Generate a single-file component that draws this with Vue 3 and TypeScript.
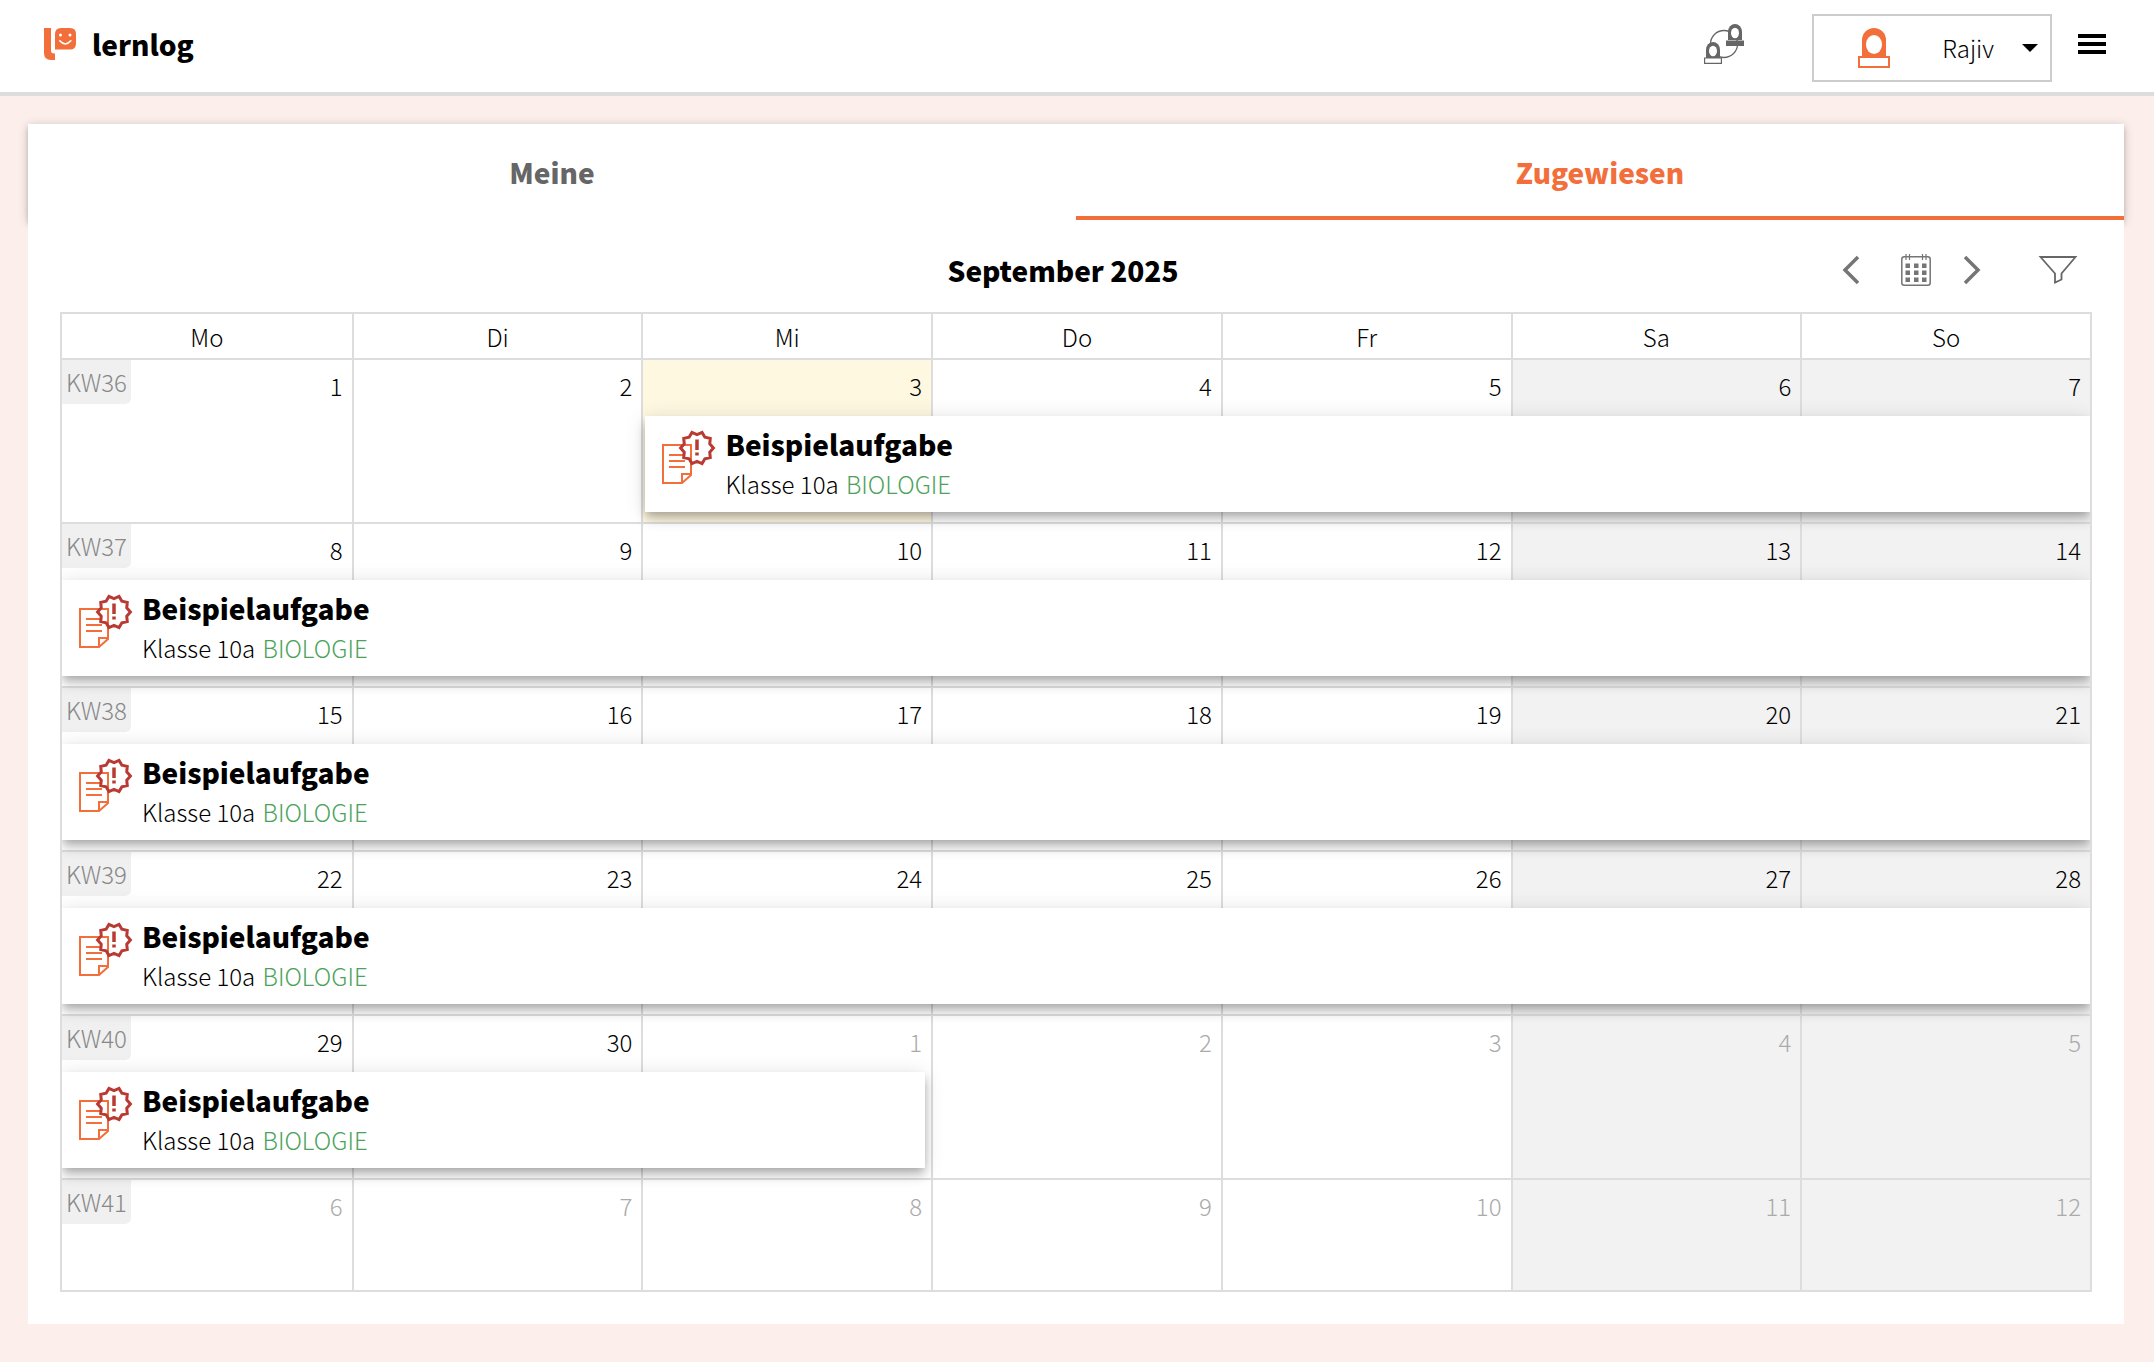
<script setup lang="ts">
interface Day {
  num: number
  muted: boolean
  today: boolean
  weekend: boolean
}
interface Entry {
  start: number
  span: number
  opens: boolean
  closes: boolean
}
interface Week {
  label: string
  days: Day[]
  entry: Entry | null
}

const weekdays = ['Mo', 'Di', 'Mi', 'Do', 'Fr', 'Sa', 'So']
const firstTaskDay = 3
const lastTaskDay = 31
const daysInMonth = 30

const weeks: Week[] = Array.from({ length: 6 }, (_, w) => {
  const days = weekdays.map((_, d) => {
    const serial = w * 7 + d + 1
    return {
      num: serial > daysInMonth ? serial - daysInMonth : serial,
      muted: serial > daysInMonth,
      today: serial === 3,
      weekend: d > 4,
    }
  })
  const monday = w * 7 + 1
  const from = Math.max(monday, firstTaskDay)
  const to = Math.min(monday + 6, lastTaskDay)
  const entry =
    from <= to
      ? { start: from - monday, span: to - from + 1, opens: from === firstTaskDay, closes: to === lastTaskDay }
      : null
  return { label: `KW${36 + w}`, days, entry }
})

function entryStyle(e: Entry) {
  return { left: `${(e.start / 7) * 100}%`, width: `${(e.span / 7) * 100}%` }
}

// ten-toothed seal outline around (36, 18)
const seal = Array.from({ length: 20 }, (_, i) => {
  const r = i % 2 ? 13.4 : 16.4
  const a = (i * Math.PI) / 10
  return `${(36 + r * Math.cos(a)).toFixed(2)},${(18 + r * Math.sin(a)).toFixed(2)}`
}).join(' ')
</script>

<template>
  <div class="page">
    <header class="topbar">
      <a class="brand" href="#">
        <svg width="32" height="32" viewBox="0 0 32 32" aria-hidden="true">
          <path d="M0 0h7v22.500q0 3 3 3h1V32H7q-7 0-7-7z" fill="#f26f3c" />
          <path d="M11 21.500V6q0-6 6-6h9q6 0 6 6v9.500q0 6-6 6z" fill="#f26f3c" />
          <circle cx="16.500" cy="7" r="1.500" fill="#fff" />
          <circle cx="26" cy="7" r="1.500" fill="#fff" />
          <path d="M15.800 12.800q5.500 6.400 11 0" fill="none" stroke="#fff" stroke-width="1.700" stroke-linecap="round" />
        </svg>
        <span>lernlog</span>
      </a>
      <button class="icon-btn contacts" type="button" aria-label="Kontakte">
        <svg width="40" height="40" viewBox="0 0 40 40">
          <circle cx="20" cy="20" r="13.500" fill="none" stroke="#666" stroke-width="1.300" />
          <path d="M24 16V8a7 8 0 0 1 14 0v8z" fill="#666" />
          <ellipse cx="31" cy="9" rx="4" ry="5.200" fill="#fff" />
          <path d="M22 16.500h18V22H22z" fill="#666" />
          <path d="M2 34v-8a7 8 0 0 1 14 0v8z" fill="#666" />
          <ellipse cx="9" cy="27" rx="4" ry="5.200" fill="#fff" />
          <path d="M.600 34h16.800v5.400H.600z" fill="#fff" stroke="#666" stroke-width="1.200" />
        </svg>
      </button>
      <button class="user" type="button">
        <svg width="32" height="40" viewBox="0 0 32 40" aria-hidden="true">
          <path d="M4 29V12a12 12 0 0 1 24 0v17z" fill="#f26f3c" />
          <ellipse cx="16" cy="16.500" rx="8" ry="9.500" fill="#fff" />
          <path d="M1 29h30v10H1z" fill="#fff" stroke="#f26f3c" stroke-width="2" />
        </svg>
        <span>Rajiv</span>
        <svg width="16" height="8" viewBox="0 0 16 8" aria-hidden="true"><path d="M0 0h16L8 8z" /></svg>
      </button>
      <button class="icon-btn" type="button" aria-label="Menü">
        <svg width="28" height="20" viewBox="0 0 28 20"><path d="M0 0h28v4H0zM0 8h28v4H0zM0 16h28v4H0z" /></svg>
      </button>
    </header>

    <main class="card">
      <nav class="tabs">
        <button class="tab" type="button">Meine</button>
        <button class="tab active" type="button">Zugewiesen</button>
      </nav>

      <section class="panel">
        <div class="toolbar">
          <h1>September 2025</h1>
          <div class="tools">
            <button class="icon-btn" type="button" aria-label="Zurück">
              <svg width="18" height="32" viewBox="0 0 18 32"><path d="M16 3 3 16l13 13" fill="none" stroke="#757575" stroke-width="3.500" /></svg>
            </button>
            <button class="icon-btn month" type="button" aria-label="Heute">
              <svg width="30" height="32" viewBox="0 0 30 32">
                <rect x=".8" y="2.800" width="28.400" height="28.400" rx="2.500" fill="none" stroke="#757575" stroke-width="1.500" />
                <path d="M5 0v6M8.500 0v6M21.500 0v6M25 0v6" stroke="#757575" stroke-width="1.200" />
                <path d="M4.500 9.500H9V14H4.500zM13 9.500h4.500V14H13zM21 9.500h4.500V14H21zM4.500 16.500H9V21H4.500zM13 16.500h4.500V21H13zM21 16.500h4.500V21H21zM4.500 23.500H9V28H4.500zM13 23.500h4.500V28H13zM21 23.500h4.500V28H21z" fill="#757575" />
              </svg>
            </button>
            <button class="icon-btn" type="button" aria-label="Weiter">
              <svg width="18" height="32" viewBox="0 0 18 32"><path d="m2 3 13 13L2 29" fill="none" stroke="#757575" stroke-width="3.500" /></svg>
            </button>
            <button class="icon-btn filter" type="button" aria-label="Filter">
              <svg width="40" height="28" viewBox="0 0 40 28"><path d="M2.500 1h35L23.500 17.500v6l-6.500 3v-9z" fill="none" stroke="#666" stroke-width="1.800" /></svg>
            </button>
          </div>
        </div>

        <div class="calendar">
          <table>
            <thead>
              <tr>
                <th v-for="name in weekdays" :key="name" scope="col">{{ name }}</th>
              </tr>
            </thead>
            <tbody>
              <tr v-for="week in weeks" :key="week.label">
                <td v-for="(day, i) in week.days" :key="i" :class="{ muted: day.muted, today: day.today, weekend: day.weekend }">
                  <div class="cell-head">
                    <span v-if="i === 0" class="kw">{{ week.label }}</span>
                    <span class="num">{{ day.num }}</span>
                  </div>
                  <div v-if="week.entry && week.entry.start === i" class="slot" :class="{ opens: week.entry.opens, closes: week.entry.closes }" :style="entryStyle(week.entry)">
                    <article class="entry">
                      <svg width="56" height="56" viewBox="0 0 56 56" aria-hidden="true">
                        <path d="M2 15h28v30L21 53H2zM21 53v-9h9M8 25h16M8 31h16M8 37h16" fill="none" stroke="#f26f3c" stroke-width="2" />
                        <polygon :points="seal" fill="none" stroke="#b93a32" stroke-width="3" />
                        <path d="M36 9.500V20M36 22.500v3" stroke="#b93a32" stroke-width="3.500" />
                      </svg>
                      <div>
                        <h2>Beispielaufgabe</h2>
                        <p>Klasse 10a <span>BIOLOGIE</span></p>
                      </div>
                    </article>
                  </div>
                </td>
              </tr>
            </tbody>
          </table>
        </div>
      </section>
    </main>
  </div>
</template>

<style>
body {
  margin: 0;
  background: #fceeea;
}
</style>

<style scoped>
.page {
  min-height: 100vh;
  font-family: 'Noto Sans CJK SC', 'Noto Sans', sans-serif;
  font-size: 24px;
  line-height: 32px;
  font-weight: 300;
  color: #000;
}
button {
  margin: 0;
  padding: 0;
  border: 0;
  background: none;
  color: inherit;
  font: inherit;
  cursor: pointer;
}
svg {
  display: block;
  flex: none;
}
.topbar {
  display: flex;
  align-items: center;
  height: 88px;
  padding: 0 48px 4px 44px;
  background: #fff;
  border-bottom: 4px solid #ddd;
}
.brand {
  display: flex;
  align-items: center;
  gap: 16px;
  margin-right: auto;
  color: #000;
  font-size: 28px;
  font-weight: 900;
  text-decoration: none;
}
.contacts {
  margin-right: 68px;
}
.user {
  display: flex;
  align-items: center;
  box-sizing: border-box;
  width: 240px;
  height: 68px;
  margin: 8px 26px 0 0;
  padding: 0 12px 0 44px;
  border: 2px solid #ccc;
}
.user span {
  margin: 0 28px 0 auto;
}
.card {
  margin: 28px 30px 38px 28px;
}
.tabs {
  display: flex;
  background: #fff;
  box-shadow: 0 2px 10px rgba(0, 0, 0, 0.2), 0 4px 4px rgba(0, 0, 0, 0.14);
}
.tab {
  flex: 1;
  height: 96px;
  padding-top: 4px;
  border-bottom: 4px solid transparent;
  color: #666;
  font-size: 28px;
  font-weight: 900;
}
.tab.active {
  border-color: #f26f3c;
  color: #f26f3c;
}
.panel {
  position: relative;
  padding: 0 32px 32px;
  background: #fff;
}
.toolbar {
  display: grid;
  grid-template-columns: 1fr auto 1fr;
  align-items: center;
  height: 92px;
  padding-right: 14px;
}
h1 {
  grid-column: 2;
  margin: 0;
  padding: 8px 12px 0 0;
  font-size: 28px;
  font-weight: 900;
}
.tools {
  display: flex;
  align-items: center;
  justify-content: flex-end;
  padding-top: 8px;
}
.month {
  margin: 0 32px 0 41px;
}
.filter {
  margin-left: 57px;
}
.calendar {
  overflow: hidden;
  border: 2px solid #ddd;
}
table {
  width: 100%;
  table-layout: fixed;
  border-collapse: separate;
  border-spacing: 0;
}
th,
td {
  box-sizing: border-box;
  padding: 0;
  border-bottom: 2px solid #ddd;
}
th + th,
td + td {
  border-left: 2px solid #ddd;
}
th {
  height: 46px;
  padding-top: 2px;
  font-weight: 300;
}
td {
  height: 164px;
  vertical-align: top;
}
tbody tr {
  position: relative;
}
tbody tr:last-child td {
  height: 110px;
  border-bottom: 0;
}
.weekend {
  background: #f2f2f2;
}
.today {
  background: #fff8e1;
}
.cell-head {
  display: flex;
  align-items: flex-start;
}
.kw {
  padding: 6px 4px;
  border-radius: 0 0 6px 0;
  background: #f0f0f0;
  color: #888;
}
.num {
  margin-left: auto;
  padding: 10px 9px 0 0;
}
.muted .num {
  color: #aaa;
}
.slot {
  position: absolute;
  top: 56px;
  z-index: 1;
  box-sizing: border-box;
}
.slot.opens {
  padding-left: 4px;
}
.slot.closes {
  padding-right: 6px;
}
.entry {
  display: flex;
  gap: 8px;
  box-sizing: border-box;
  height: 96px;
  padding: 12px 16px 0;
  background: #fff;
  box-shadow: 0 4px 8px -2px rgba(0, 0, 0, 0.2), 0 8px 10px rgba(0, 0, 0, 0.14), 0 2px 20px rgba(0, 0, 0, 0.12);
}
.entry svg {
  margin-top: 2px;
}
h2 {
  margin: 0;
  font-size: 28px;
  line-height: 32px;
  font-weight: 900;
}
p {
  margin: 8px 0 0;
}
p span {
  margin-left: 2px;
  color: #4ba35a;
}
</style>
